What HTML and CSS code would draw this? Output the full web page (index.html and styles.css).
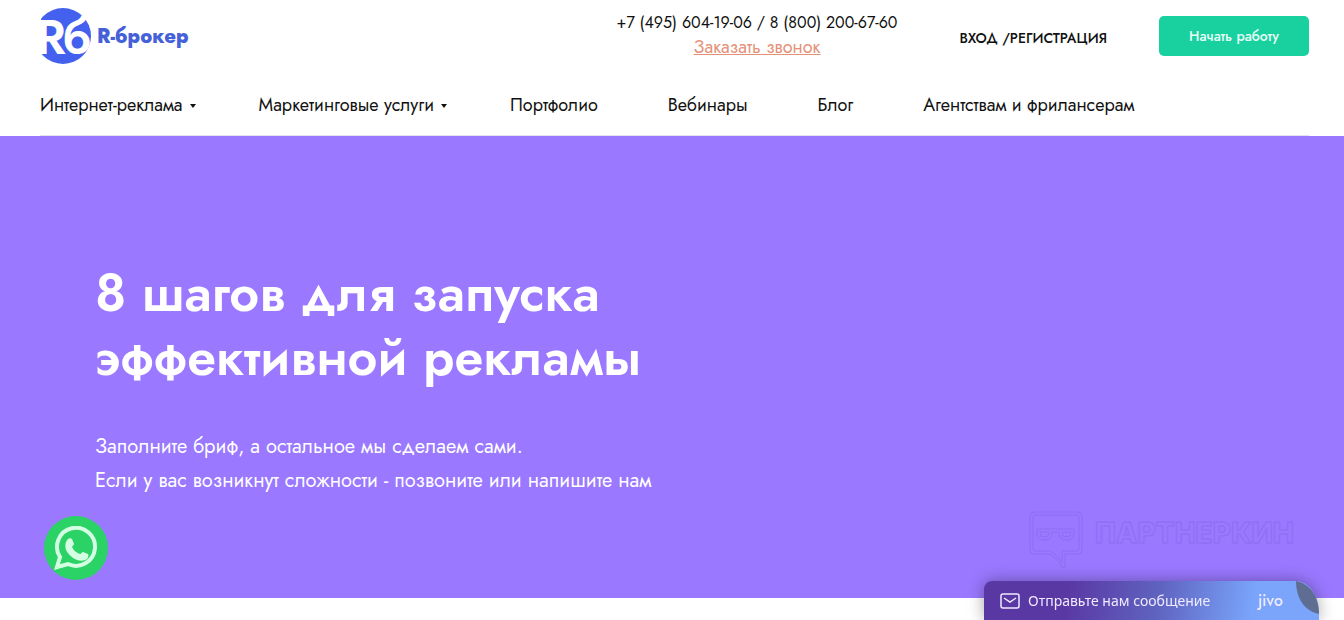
FILE: index.html
```html
<!DOCTYPE html>
<html lang="ru">
<head>
    <meta charset="UTF-8">
    <meta name="viewport" content="width=device-width, initial-scale=1.0">
    <title>R-брокер</title>
    <link rel="stylesheet" href="styles.css">
</head>
<body>
    <header class="header">
        <div class="header-top">
            <a class="logo" href="#">
                <svg class="logo-icon" viewBox="0 0 52 56" width="52" height="56" aria-hidden="true">
                    <circle cx="23" cy="28" r="28" fill="#4361ee"/>
                    <path fill="#fff" d="M-6 0h7v56h-7z"/>
                    <text class="logo-letters" x="-4" y="46">R</text>
                    <text class="logo-letters" x="23" y="46">б</text>
                </svg>
                <span class="logo-name">R-брокер</span>
            </a>
            <div class="contacts">
                <span class="phones">+7 (495) 604-19-06 / 8 (800) 200-67-60</span>
                <a class="callback" href="#">Заказать звонок</a>
            </div>
            <a class="login" href="#">ВХОД /РЕГИСТРАЦИЯ</a>
            <button class="start-button" type="button">Начать работу</button>
        </div>
        <nav class="menu">
            <a class="has-submenu" href="#">Интернет-реклама</a>
            <a class="has-submenu" href="#">Маркетинговые услуги</a>
            <a href="#">Портфолио</a>
            <a href="#">Вебинары</a>
            <a href="#">Блог</a>
            <a href="#">Агентствам и фрилансерам</a>
        </nav>
    </header>

    <main class="hero">
        <h1>8 шагов для запуска<br>эффективной рекламы</h1>
        <p>Заполните бриф, а остальное мы сделаем сами.<br>Если у вас возникнут сложности - позвоните или напишите нам</p>
        <div class="watermark">
            <svg viewBox="0 0 54 58" width="54" height="58" fill="none" stroke="currentColor" aria-hidden="true">
                <path d="M5 1h44a4 4 0 0 1 4 4v34a4 4 0 0 1-4 4H36v12q0 3-3 1-5-9-13-13H5a4 4 0 0 1-4-4V5a4 4 0 0 1 4-4z"/>
                <path d="M6 4h42a2 2 0 0 1 2 2v32a2 2 0 0 1-2 2H33v12q-5-9-12-12H6a2 2 0 0 1-2-2V6a2 2 0 0 1 2-2z"/>
                <path d="M8 18h37v5a6 6 0 0 1-6 6h-3a6 6 0 0 1-6-6v-2h-7v2a6 6 0 0 1-6 6h-3a6 6 0 0 1-6-6z"/>
                <path d="M11 21h9v1a4 4 0 0 1-4 4h-1a4 4 0 0 1-4-4zM33 21h9v1a4 4 0 0 1-4 4h-1a4 4 0 0 1-4-4z"/>
            </svg>
            <span>ПАРТНЕРКИН</span>
        </div>
    </main>

    <a class="whatsapp" href="#" aria-label="WhatsApp">
        <svg viewBox="0 0 44 44" width="44" height="44" aria-hidden="true">
            <path d="M3 41l3-10a19 19 0 1 1 8 7z" fill="none" stroke="#d5ffe3" stroke-width="4"/>
            <path d="M14 13c1-1 3-1 4 0l2 5c0 1-2 2-2 3 2 4 5 6 8 7 1 0 2-2 3-2l5 2c1 1 0 4-1 5-3 2-6 2-10 1-5-2-9-6-11-10-1-4-1-8 2-11z" fill="#d5ffe3"/>
        </svg>
    </a>

    <button class="chat" type="button">
        <svg class="chat-mail" viewBox="0 0 20 16" width="20" height="16" fill="none" stroke="currentColor" stroke-width="1.500" aria-hidden="true">
            <rect x="1" y="1" width="18" height="14" rx="2"/>
            <path d="M4 5l6 4 6-4"/>
        </svg>
        <span class="chat-text">Отправьте нам сообщение</span>
        <span class="chat-brand">jivo</span>
        <svg class="chat-leaf" viewBox="0 0 23 33" width="23" height="33" aria-hidden="true">
            <path d="M0 0C14 3 23 15 23 33 9 30 0 18 0 0z" fill="#5f6d92"/>
        </svg>
    </button>
</body>
</html>
```
FILE: styles.css
```css
* {
    box-sizing: border-box;
}

body {
    margin: 0;
    background-color: #fff;
    color: #111;
    font-family: Jost, Lato, sans-serif;
}

a {
    color: inherit;
    text-decoration: none;
}

/* Header */
.header {
    padding: 0 35px 0 40px;
}

.header-top {
    display: flex;
    align-items: flex-start;
    padding-top: 8px;
}

.logo {
    display: flex;
    align-items: center;
    gap: 5px;
    margin-right: auto;
    color: #4560d8;
}

.logo-icon {
    overflow: visible;
}

.logo-letters {
    fill: #fff;
    font-size: 48px;
    font-weight: 600;
}

.logo-name {
    font-size: 20px;
    font-weight: 800;
}

.contacts {
    display: flex;
    flex-direction: column;
    align-items: center;
    margin-right: 62px;
    padding-top: 3px;
    font-size: 16px;
    line-height: 24px;
    white-space: nowrap;
}

.callback {
    color: #e5917a;
    font-size: 18px;
    text-decoration: underline;
}

.login {
    margin-right: 52px;
    padding-top: 20px;
    font-size: 14px;
    font-weight: 500;
    line-height: 20px;
    white-space: nowrap;
}

.start-button {
    width: 150px;
    height: 40px;
    margin-top: 8px;
    padding: 0;
    border: none;
    border-radius: 5px;
    background-color: #19d09f;
    color: #e8fff8;
    font-family: inherit;
    font-size: 14px;
    font-weight: 500;
    cursor: pointer;
}

/* Menu */
.menu {
    display: flex;
    gap: 70px;
    padding: 29px 0 18px;
    border-bottom: 1px solid #e4e0ee;
    font-size: 18px;
    line-height: 24px;
    white-space: nowrap;
}

.has-submenu {
    display: flex;
    align-items: center;
    gap: 7px;
    margin-right: -7px;
}

.has-submenu::after {
    content: "";
    margin-top: 2px;
    border: 3px solid transparent;
    border-top: 4px solid #111;
    border-bottom: none;
}

/* Hero */
.hero {
    position: relative;
    padding: 125px 95px 100px;
    background-color: #9a78ff;
    color: #fff;
}

.hero h1 {
    margin: 0 0 41px;
    font-size: 52px;
    font-weight: 600;
    line-height: 64px;
}

.hero p {
    margin: 0;
    font-size: 20px;
    line-height: 34px;
}

.watermark {
    display: flex;
    align-items: center;
    gap: 12px;
    position: absolute;
    right: 50px;
    bottom: 29px;
    color: #8f6df2;
}

.watermark span {
    margin-bottom: 14px;
    color: transparent;
    font-family: Inter, sans-serif;
    font-size: 28px;
    font-weight: 800;
    -webkit-text-stroke: 1px #8f6df2;
}

/* WhatsApp button */
.whatsapp {
    display: flex;
    align-items: center;
    justify-content: center;
    position: fixed;
    left: 44px;
    bottom: 40px;
    width: 64px;
    height: 64px;
    border-radius: 50%;
    background-color: #2bd366;
}

/* Chat widget */
.chat {
    display: flex;
    align-items: center;
    position: fixed;
    right: 25px;
    bottom: 0;
    width: 335px;
    height: 39px;
    padding: 0 36px 0 16px;
    border: none;
    border-radius: 8px 23px 0 0 / 8px 33px 0 0;
    background: linear-gradient(100deg, #5a38a4 25%, #5f63c0 52%, #7aa5fb 80%);
    box-shadow: 0 0 16px rgba(0, 0, 0, 0.35);
    color: #efeaff;
    font-family: "Noto Sans", sans-serif;
    font-size: 14px;
    cursor: pointer;
}

.chat-text {
    margin: 0 auto 0 8px;
    white-space: nowrap;
}

.chat-brand {
    font-family: Jost, Lato, sans-serif;
    font-size: 16px;
    font-weight: 500;
}

.chat-leaf {
    position: absolute;
    top: 0;
    right: 0;
}
```
